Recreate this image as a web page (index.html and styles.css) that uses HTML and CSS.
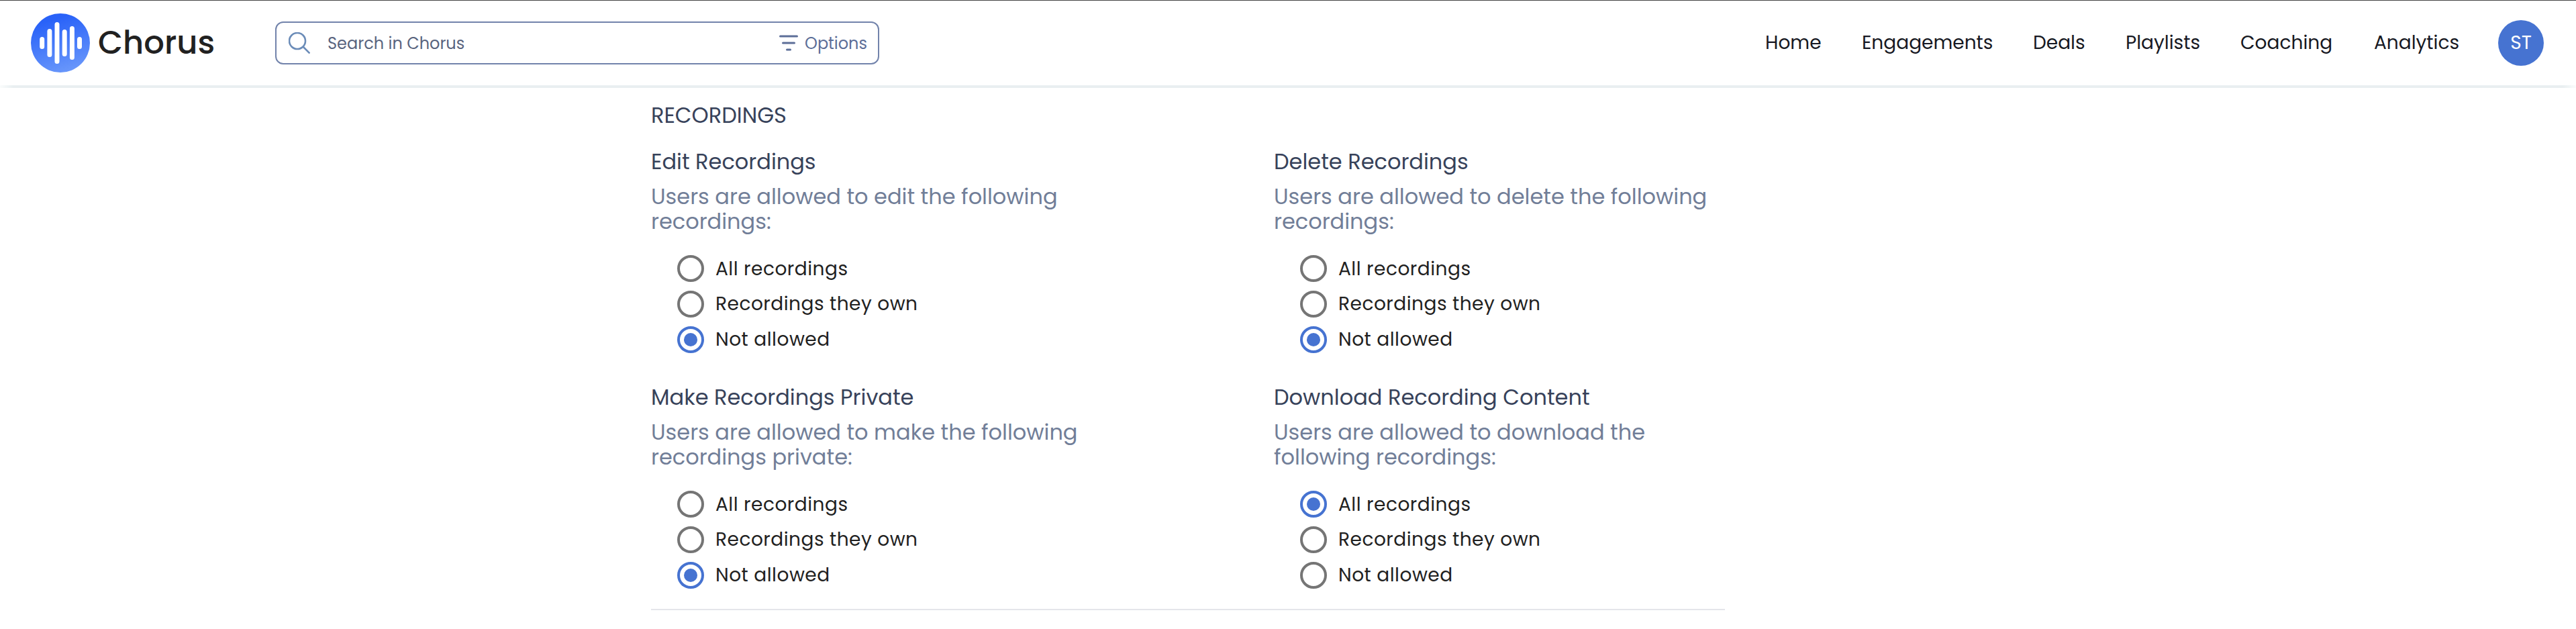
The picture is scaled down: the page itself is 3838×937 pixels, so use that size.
FILE: index.html
```
<!DOCTYPE html>
<html lang="en">
<head>
  <meta charset="UTF-8" />
  <title>Chorus</title>
  <link rel="stylesheet" href="styles.css">
</head>
<body>
  <header class="header">
    <a class="logo">
      <svg class="logo-icon" viewBox="0 0 88 88">
        <defs>
          <linearGradient id="logoFill" x1="0.35" y1="0" x2="0.65" y2="1">
            <stop offset="0.1" stop-color="#2962f8" />
            <stop offset="1" stop-color="#6a98fb" />
          </linearGradient>
        </defs>
        <circle cx="44" cy="44" r="44" fill="url(#logoFill)" />
        <g stroke="#fff" stroke-width="7" stroke-linecap="round">
          <path d="M16.7 38.5v11M27.9 26.5v35M39 16.5v55M50.2 27.5v33M61.4 22.5v43M72.5 38.5v11" />
        </g>
      </svg>
      <span class="logo-text">Chorus</span>
    </a>

    <div class="search">
      <svg class="search-icon" viewBox="0 0 32 32" fill="none" stroke="#6b8cb8" stroke-width="2.6">
        <circle cx="13" cy="13" r="12" />
        <path d="M21.5 21.5L31.5 31.5" />
      </svg>
      <span class="search-placeholder">Search in Chorus</span>
      <div class="options-btn">
        <svg class="filter-icon" viewBox="0 0 28 24" stroke="#5c6e98" stroke-width="3" stroke-linecap="round">
          <path d="M1.5 2h25M5.5 12h17M11.5 22h5" />
        </svg>
        <span>Options</span>
      </div>
    </div>

    <nav class="nav">
      <a>Home</a>
      <a>Engagements</a>
      <a>Deals</a>
      <a>Playlists</a>
      <a>Coaching</a>
      <a>Analytics</a>
      <div class="avatar">ST</div>
    </nav>
  </header>
  <div class="header-shadow"></div>

  <main class="section">
    <h2>RECORDINGS</h2>
    <div class="grid">
      <div class="card">
        <h3>Edit Recordings</h3>
        <p>Users are allowed to edit the following recordings:</p>
        <div class="choices">
          <label class="choice"><span class="radio"></span><span class="choice-text">All recordings</span></label>
          <label class="choice"><span class="radio"></span><span class="choice-text">Recordings they own</span></label>
          <label class="choice"><span class="radio checked"></span><span class="choice-text">Not allowed</span></label>
        </div>
      </div>

      <div class="card">
        <h3>Delete Recordings</h3>
        <p>Users are allowed to delete the following recordings:</p>
        <div class="choices">
          <label class="choice"><span class="radio"></span><span class="choice-text">All recordings</span></label>
          <label class="choice"><span class="radio"></span><span class="choice-text">Recordings they own</span></label>
          <label class="choice"><span class="radio checked"></span><span class="choice-text">Not allowed</span></label>
        </div>
      </div>

      <div class="card">
        <h3>Make Recordings Private</h3>
        <p>Users are allowed to make the following recordings private:</p>
        <div class="choices">
          <label class="choice"><span class="radio"></span><span class="choice-text">All recordings</span></label>
          <label class="choice"><span class="radio"></span><span class="choice-text">Recordings they own</span></label>
          <label class="choice"><span class="radio checked"></span><span class="choice-text">Not allowed</span></label>
        </div>
      </div>

      <div class="card">
        <h3>Download Recording Content</h3>
        <p>Users are allowed to download the following recordings:</p>
        <div class="choices">
          <label class="choice"><span class="radio checked"></span><span class="choice-text">All recordings</span></label>
          <label class="choice"><span class="radio"></span><span class="choice-text">Recordings they own</span></label>
          <label class="choice"><span class="radio"></span><span class="choice-text">Not allowed</span></label>
        </div>
      </div>
    </div>
    <div class="divider"></div>
  </main>
</body>
</html>
```
FILE: styles.css
```
* {
  box-sizing: border-box;
}

body {
  margin: 0;
  height: 100vh;
  overflow: hidden;
  font-family: 'Poppins', 'Inter', sans-serif;
  background: #fff;
  color: #212121;
}

h2, h3, p {
  margin: 0;
  font-weight: 400;
}

/* Header */
.header {
  display: flex;
  align-items: center;
  height: 127px;
  padding: 0 48px 0 46px;
  border-top: 1px solid #444;
  background: #fff;
}

.header-shadow {
  height: 4px;
  background: linear-gradient(to right, #fafcfc, #e9eff1 20px, #e9eff1 calc(100% - 20px), #fafcfc);
}

.logo {
  display: flex;
  align-items: center;
  gap: 12px;
  width: 364px;
}

.logo-icon {
  width: 88px;
  height: 88px;
}

.logo-text {
  padding-bottom: 1px;
  font-size: 48px;
  font-weight: 500;
}

.search {
  display: flex;
  align-items: center;
  width: 900px;
  height: 64px;
  padding: 0 16px 0 18px;
  border: 2px solid #7283ab;
  border-radius: 12px;
  font-size: 24px;
}

.search-icon {
  width: 32px;
  height: 32px;
  margin-right: 26px;
}

.search-placeholder {
  color: #59647e;
}

.options-btn {
  display: flex;
  align-items: center;
  gap: 10px;
  margin-left: auto;
  color: #5c6e98;
}

.filter-icon {
  width: 28px;
  height: 24px;
}

.nav {
  display: grid;
  grid-template-columns: 144px 255px 138px 171px 199px 185px 68px;
  align-items: center;
  margin-left: auto;
  font-size: 28px;
  color: #171923;
}

.nav a {
  padding-bottom: 1px;
}

.avatar {
  display: flex;
  align-items: center;
  justify-content: center;
  width: 68px;
  height: 68px;
  padding-bottom: 1px;
  border-radius: 50%;
  background: #4673d1;
  color: #fff;
}

/* Recording permissions */
.section {
  width: 1600px;
  margin-left: 970px;
  padding-top: 22px;
}

h2, h3 {
  font-size: 32px;
  line-height: 38px;
  color: #37425a;
}

.grid {
  display: grid;
  grid-template-columns: 928px 672px;
  row-gap: 41px;
  margin-top: 31px;
}

.card p {
  max-width: 672px;
  margin-top: 14px;
  font-size: 32px;
  line-height: 37px;
  color: #717e98;
}

.choices {
  margin-top: 26px;
  padding-left: 39px;
}

.choice {
  display: flex;
  align-items: center;
  gap: 17px;
  height: 52.67px;
  font-size: 28px;
}

.choice-text {
  padding-top: 1px;
  letter-spacing: 0.5px;
}

.radio {
  display: flex;
  align-items: center;
  justify-content: center;
  width: 40px;
  height: 40px;
  border: 4px solid #757575;
  border-radius: 50%;
}

.radio.checked {
  border-color: #4673d1;
}

.radio.checked::after {
  content: "";
  width: 20px;
  height: 20px;
  border-radius: 50%;
  background: #4673d1;
}

.divider {
  height: 2px;
  margin-top: 24px;
  background: #e4e5ea;
}
```
